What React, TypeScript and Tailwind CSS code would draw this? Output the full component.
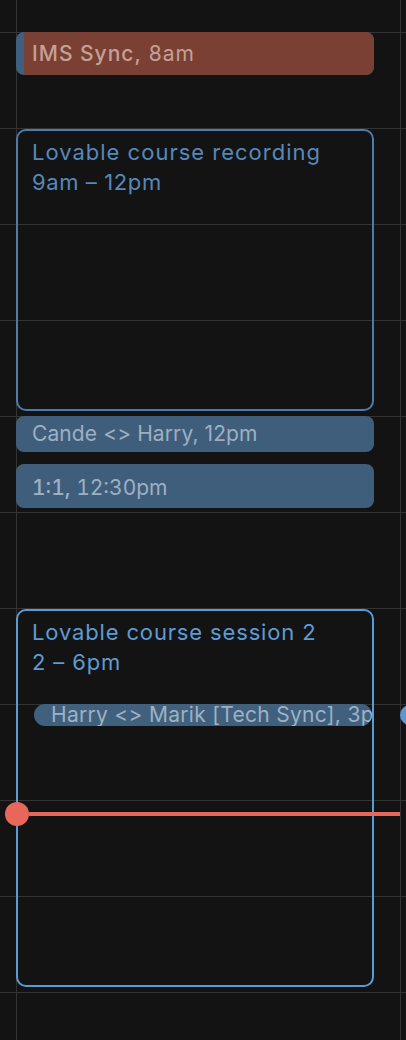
const hours = [0, 1, 2, 3, 4, 5, 6, 7, 8, 9, 10]

function GridLines() {
  return (
    <div className="col-start-1 row-start-1 flex flex-col">
      <div className="h-8 shrink-0" />
      {hours.map((h) => (
        <div key={h} className="h-24 shrink-0 border-t border-[#333333]" />
      ))}
    </div>
  )
}

function Columns() {
  return (
    <div className="col-start-1 row-start-1 ml-4 w-[385px] h-full border-x border-[#333333]" />
  )
}

function Events() {
  return (
    <div className="col-start-1 row-start-1 flex flex-col pl-4 w-[406px] text-[21px] leading-[30px]">
      {/* IMS Sync */}
      <div className="mt-8 h-[43px] w-[358px] rounded-lg bg-[#3d5f80] overflow-hidden flex">
        <div className="ml-2 flex-1 bg-[#7a4034] rounded-r-lg rounded-l-[2px] pl-2 pt-[7px] tracking-[1px] text-[#c4a097] whitespace-nowrap">
          <span className="font-medium">IMS Sync,</span> 8am
        </div>
      </div>

      {/* Lovable course recording */}
      <div className="mt-[54px] h-[282px] w-[358px] rounded-[10px] border-2 border-[#4e7ca8] pl-[14px] pt-[6px] text-[22px] tracking-[0.85px] text-[#5689ba]">
        <div className="tracking-[1px]">Lovable course recording</div>
        <div className="tracking-[0.6px]">9am – 12pm</div>
      </div>

      {/* Cande <> Harry */}
      <div className="mt-[5px] h-[36px] w-[358px] rounded-lg bg-[#3f5e7c] pl-4 pt-[3px] tracking-[0.1px] text-[#9db0c2] whitespace-nowrap">
        Cande &lt;&gt; Harry, 12pm
      </div>

      {/* 1:1 */}
      <div className="mt-3 h-[44px] w-[358px] rounded-lg bg-[#3f5e7c] pl-4 pt-[9px] tabular-nums text-[#9db0c2] whitespace-nowrap">
        <span className="font-medium">1:1,</span> 12:30pm
      </div>

      {/* Lovable course session 2 */}
      <div className="mt-[101px] h-[378px] w-[358px] rounded-[10px] border-2 border-[#5b9bd5] pl-[14px] pt-[6px] text-[22px] tracking-[0.85px] text-[#5e9bd3]">
        <div>Lovable course session 2</div>
        <div>2 – 6pm</div>
        <div className="mt-[27px] ml-[2px] flex items-center tracking-[0.3px]">
          <div className="h-[22px] w-[338px] shrink-0 rounded-full bg-[#41607e] overflow-hidden whitespace-nowrap pl-[17px] text-[21px] leading-[22px] text-[#9db1c4]">
            Harry &lt;&gt; Marik [Tech Sync], 3pm
          </div>
          <div className="ml-[28px] h-[20px] w-[30px] shrink-0 rounded-full bg-[#5a9ad4]" />
        </div>
      </div>
    </div>
  )
}

function NowLine() {
  return (
    <div className="col-start-1 row-start-1 pointer-events-none">
      <div className="mt-[802px] flex items-center">
        <div className="ml-[5px] h-6 w-6 shrink-0 rounded-full bg-[#e8675b]" />
        <div className="h-[4px] w-[371px] shrink-0 bg-[#e8675b]" />
      </div>
    </div>
  )
}

export default function App() {
  return (
    <div
      className="w-[406px] h-[1040px] bg-[#131313] overflow-hidden grid"
      style={{ fontFamily: 'Inter, "Noto Sans", sans-serif' }}
    >
      <GridLines />
      <Columns />
      <Events />
      <NowLine />
    </div>
  )
}
